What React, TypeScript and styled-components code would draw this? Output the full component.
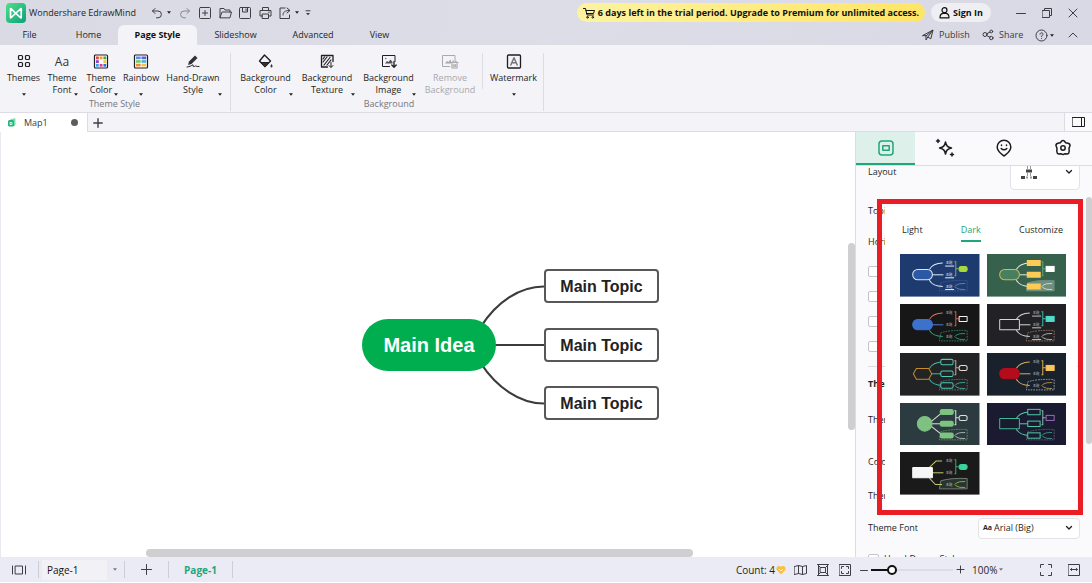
import React from 'react';
import styled, { createGlobalStyle, css } from 'styled-components';

const GREEN = '#1fa67a';
const UI = '"Open Sans", "Noto Sans", "Noto Sans CJK SC", sans-serif';

const GlobalStyle = createGlobalStyle`
  * { box-sizing: border-box; }
  body { margin: 0; background: #fff; overflow: hidden; }
  button, select, input { font: inherit; color: inherit; margin: 0; }
  button { border: 0; background: none; padding: 0; }
  svg { display: block; flex: none; }
`;

const Shell = styled.div`
  display: flex;
  flex-direction: column;
  height: 100vh;
  padding-bottom: 1px;
  font: 9px/12px ${UI};
  color: #1f1f23;
  white-space: nowrap;
`;

const Header = styled.header`
  background: linear-gradient(100deg, #d9dae3, #dcdde7 50%, #d8d9e4);
`;

const TitleBar = styled.div`
  display: flex;
  align-items: center;
  height: 25px;
  padding: 0 6px;
`;

const AppTitle = styled.span`
  width: 118px;
  margin-left: 3px;
`;

const IconButton = styled.button<{ $w: number }>`
  display: flex;
  flex: none;
  align-items: center;
  justify-content: center;
  width: ${(p) => p.$w}px;
  height: 20px;
  color: #3e3e44;
`;

const Spacer = styled.div`
  flex: 1;
`;

const Pill = styled.button<{ $tone: 'yellow' | 'light' }>`
  display: flex;
  align-items: center;
  justify-content: center;
  height: 19px;
  border-radius: 10px;
  font-weight: 700;
  color: #111;
  ${(p) =>
    p.$tone === 'yellow'
      ? css`
          width: 348px;
          gap: 3px;
          background: linear-gradient(90deg, #fdf3a0, #ffe566);
        `
      : css`
          width: 60px;
          gap: 3px;
          margin-left: 6px;
          background: #eeeef3;
        `}
`;

const WindowButtons = styled.div`
  display: flex;
  padding-left: 17px;
`;

const MenuBar = styled.nav`
  display: flex;
  height: 20px;
  padding-right: 2px;
`;

const MenuTab = styled.button<{ $w: number; $active?: boolean }>`
  width: ${(p) => p.$w}px;
  height: 20px;
  ${(p) =>
    p.$active &&
    css`
      font-weight: 700;
      color: #111;
      background: #f3f3f8;
      border-radius: 6px 6px 0 0;
    `}
`;

const MenuAction = styled.button<{ $w: number }>`
  display: flex;
  align-items: center;
  gap: 5px;
  width: ${(p) => p.$w}px;
  color: #3a3a40;
`;

const Ribbon = styled.div`
  display: flex;
  height: 68px;
  background: #f3f3f8;
  border-bottom: 1px solid #dcdce4;
`;

const RibbonGroup = styled.section`
  display: flex;
  flex-direction: column;
  margin: 8px 0 1px;
  padding-left: 4px;
  border-right: 1px solid #dcdce4;
  &:first-child {
    padding-right: 5px;
  }
`;

const RibbonTools = styled.div`
  display: flex;
  flex: 1;
`;

const GroupLabel = styled.div`
  height: 14px;
  line-height: 12px;
  text-align: center;
  color: #77777d;
`;

const Tool = styled.button<{ $w: number; $single?: boolean }>`
  display: grid;
  grid-template-rows: 19px 1fr;
  justify-items: center;
  width: ${(p) => p.$w}px;
  height: 45px;
  &:disabled {
    color: #a9a9ae;
  }
  > :nth-child(1) {
    grid-area: 1 / 1;
    align-self: start;
  }
  > :nth-child(2) {
    grid-area: 2 / 1;
    align-self: start;
  }
  > :nth-child(3) {
    grid-area: 2 / 1;
    align-self: end;
    justify-self: ${(p) => (p.$single ? 'center' : 'end')};
    margin: 0 3px 2px;
  }
`;

const ToolDivider = styled.div`
  width: 1px;
  height: 36px;
  margin: 0 1px;
  background: #dcdce4;
`;

const DocBar = styled.div`
  display: flex;
  height: 19px;
  background: #f3f3f8;
  border-bottom: 1px solid #dcdce4;
`;

const DocTab = styled.button`
  display: flex;
  align-items: center;
  width: 88px;
  height: 19px;
  padding: 0 9px 0 8px;
  gap: 8px;
  background: #fff;
  border-right: 1px solid #dcdce4;
  color: #3a3a40;
`;

const Dot = styled.span`
  width: 7px;
  height: 7px;
  margin-left: auto;
  border-radius: 50%;
  background: #5c5c60;
`;

const PanelToggle = styled.button`
  display: flex;
  align-items: center;
  justify-content: center;
  width: 28px;
  background: #fafafc;
  border-left: 1px solid #dcdce4;
`;

const Workspace = styled.main`
  display: flex;
  flex: 1;
  min-height: 0;
`;

const Canvas = styled.div`
  position: relative;
  flex: 1;
  overflow: hidden;
  background: #fff;
  border-left: 1px solid #e9e9ef;
  svg {
    position: absolute;
    left: 479px;
    top: 148px;
  }
`;

const Node = styled.div<{ $x: number; $y: number; $root?: boolean }>`
  position: absolute;
  left: ${(p) => p.$x}px;
  top: ${(p) => p.$y}px;
  display: flex;
  align-items: center;
  justify-content: center;
  font: bold 16px/20px "Liberation Sans", Arial, sans-serif;
  ${(p) =>
    p.$root
      ? css`
          width: 134px;
          height: 52px;
          border-radius: 26px;
          background: #00ae50;
          color: #fff;
          font-size: 20px;
        `
      : css`
          width: 115px;
          height: 34px;
          padding-top: 2px;
          border: 2px solid #58585a;
          border-radius: 4px;
          background: #fff;
          color: #222;
        `}
`;

const ScrollThumb = styled.div<{ $axis: 'x' | 'y' }>`
  position: absolute;
  border-radius: 4px;
  background: #cfcfd1;
  ${(p) =>
    p.$axis === 'x'
      ? css`
          left: 17%;
          width: 64%;
          bottom: 0;
          height: 8px;
        `
      : css`
          top: 26%;
          height: 44%;
          right: 0;
          width: 7px;
        `}
`;

const Sidebar = styled.aside`
  position: relative;
  display: flex;
  flex-direction: column;
  width: 237px;
  background: #fafafc;
  border-left: 1px solid #dcdce4;
`;

const PanelTabs = styled.div`
  display: grid;
  flex: none;
  grid-template-columns: repeat(4, 1fr);
  height: 34px;
  border-bottom: 1px solid #dcdce4;
`;

const PanelTab = styled.button<{ $active?: boolean }>`
  display: flex;
  align-items: center;
  justify-content: center;
  color: #1c1c1e;
  border-bottom: 2px solid transparent;
  ${(p) =>
    p.$active &&
    css`
      color: ${GREEN};
      background: #def0ea;
      border-bottom-color: ${GREEN};
    `}
`;

const PanelViewport = styled.div`
  position: relative;
  flex: 1;
  min-height: 0;
  overflow: hidden;
`;

const PanelContent = styled.div`
  margin-top: -12px;
  padding: 0 12px 0 12px;
`;

const Row = styled.div<{ $h: number; $bold?: boolean }>`
  display: flex;
  align-items: center;
  justify-content: space-between;
  height: ${(p) => p.$h}px;
  font-weight: ${(p) => (p.$bold ? 700 : 400)};
`;

const Checks = styled.div`
  padding: 7px 0;
`;

const CheckRow = styled.label<{ $h: number }>`
  display: flex;
  align-items: center;
  gap: 5px;
  height: ${(p) => p.$h}px;
  input {
    appearance: none;
    width: 11px;
    height: 11px;
    border: 1px solid #c4c4ca;
    border-radius: 2px;
    background: #fff;
  }
`;

const Rule = styled.hr`
  margin: 0;
  border: 0;
  border-top: 1px solid #dcdce4;
`;

const Picker = styled.div<{ $w: number; $h: number; $inset: number }>`
  display: flex;
  align-items: center;
  gap: 2px;
  width: ${(p) => p.$w}px;
  height: ${(p) => p.$h}px;
  padding: 0 6px 0 ${(p) => p.$inset}px;
  background: #fff;
  border: 1px solid #e2e2e8;
  border-radius: 4px;
  small {
    font-size: 7px;
    font-weight: 700;
  }
  select {
    flex: 1;
    min-width: 0;
    appearance: none;
    border: 0;
    padding: 0;
    background: none;
  }
`;

const SideScroll = styled.div`
  position: absolute;
  top: 8%;
  right: 0;
  width: 6px;
  height: 63%;
  border-radius: 3px;
  background: #cfcfd1;
`;

const Popup = styled.div`
  position: absolute;
  top: 75px;
  right: 15px;
  width: 192px;
  height: 303px;
  padding: 15px 11px 0 15px;
  background: #fff;
`;

const PopupTabs = styled.div`
  display: flex;
  justify-content: space-between;
  padding: 0 3px 0 2px;
`;

const PopupTab = styled.button<{ $active?: boolean }>`
  height: 20px;
  padding-bottom: 3px;
  border-bottom: 2px solid ${(p) => (p.$active ? GREEN : 'transparent')};
  color: ${(p) => (p.$active ? GREEN : 'inherit')};
`;

const ThumbGrid = styled.div`
  display: grid;
  grid-template-columns: 1fr 1fr;
  grid-template-rows: repeat(5, 1fr);
  gap: 7px;
  height: 241px;
  margin-top: 12px;
  button {
    min-height: 0;
  }
  svg {
    width: 100%;
    height: 100%;
  }
`;

const Highlight = styled.div`
  position: absolute;
  top: 67px;
  right: 9px;
  width: 206px;
  height: 316px;
  border: 5px solid #ea1c24;
  pointer-events: none;
`;

const StatusBar = styled.footer`
  display: flex;
  align-items: center;
  height: 25px;
  padding-right: 4px;
  font-size: 10px;
  background: #ebebf5;
`;

const StatusDivider = styled.div`
  width: 1px;
  height: 17px;
  background: #cdcdd6;
`;

const PageSelect = styled.div`
  display: flex;
  align-items: center;
  width: 85px;
  padding: 0 7px 0 3px;
  select {
    flex: 1;
    height: 20px;
    margin-right: 6px;
    padding: 0 5px;
    appearance: none;
    border: 0;
    background: #f1f1f6;
    color: #111;
  }
`;

const PageTab = styled.button`
  width: 63px;
  font-weight: 700;
  color: ${GREEN};
`;

const Count = styled.div`
  display: flex;
  align-items: center;
  gap: 1px;
  margin-right: 3px;
`;

const Zoom = styled.input`
  appearance: none;
  width: 82px;
  height: 12px;
  background: linear-gradient(#111, #111) left center / 20px 2px no-repeat,
    linear-gradient(#dcdce2, #dcdce2) center / 100% 2px no-repeat;
  &::-webkit-slider-thumb {
    appearance: none;
    width: 10px;
    height: 10px;
    border: 2px solid #111;
    border-radius: 50%;
    background: #fff;
  }
`;

const ZoomValue = styled.button`
  display: flex;
  align-items: center;
  gap: 2px;
  width: 65px;
  padding-left: 5px;
`;

type IconProps = { w?: number; h?: number; sw?: number; children: React.ReactNode };

const Icon = ({ w = 16, h = 16, sw = 1, children }: IconProps) => (
  <svg
    width={w}
    height={h}
    viewBox={`0 0 ${w} ${h}`}
    fill="none"
    stroke="currentColor"
    strokeWidth={sw}
    strokeLinecap="round"
    strokeLinejoin="round"
    aria-hidden="true"
  >
    {children}
  </svg>
);

const Caret = ({ color = '#222' }: { color?: string }) => (
  <svg width="4" height="3" viewBox="0 0 4 3" aria-hidden="true">
    <path d="M0 .3h4L2 2.7z" fill={color} />
  </svg>
);

const Chevron = () => (
  <Icon w={8} h={6} sw={1.3}>
    <path d="M1.5 1.5L4 4l2.500-2.500" />
  </Icon>
);

const Logo = () => (
  <svg width="20" height="20" viewBox="0 0 20 20" aria-hidden="true">
    <defs>
      <linearGradient id="logo" x1="0" y1="0" x2="1" y2="1">
        <stop offset="0" stopColor="#4fe08a" />
        <stop offset="1" stopColor="#0e9f7c" />
      </linearGradient>
    </defs>
    <rect width="20" height="20" rx="4" fill="url(#logo)" />
    <path
      d="M4.500 6v8.500q0 .6.500.2L9.500 10.500l5-4.700q.7-.5.700.3v8.400q0 .8-.7.200L10 10.500 5.200 5.800q-.7-.6-.7.200z"
      fill="none"
      stroke="#fff"
      strokeWidth="1.700"
      strokeLinejoin="round"
    />
  </svg>
);

const swatches = ['#e8443a', '#f59a23', '#3fae49', '#8e44c9', '#f7c52d', '#35a7e8', '#d83a8a', '#2f6fe0'];

const toolIcons: Record<string, React.ReactNode> = {
  themes: (
    <Icon sw={1.2}>
      <rect x="2.500" y="2.500" width="4" height="4" rx="1" />
      <rect x="9.500" y="2.500" width="4" height="4" rx="1" />
      <rect x="2.500" y="9.500" width="4" height="4" rx="1" />
      <rect x="9.500" y="9.500" width="4" height="4" rx="1" />
    </Icon>
  ),
  color: (
    <Icon>
      <rect x="1.500" y="2" width="13" height="13" rx="1" strokeWidth="1.200" fill="#fff" />
      {[
        [3, 3.5], [6.700, 3.500], [10.400, 3.500], [3, 7.200], [10.400, 7.200], [3, 10.900], [6.700, 10.900], [10.400, 10.900],
      ].map(([x, y], i) => (
        <rect key={i} x={x} y={y} width="2.800" height="2.800" fill={swatches[i]} stroke="none" />
      ))}
    </Icon>
  ),
  rainbow: (
    <Icon>
      <rect x="1.500" y="2" width="13" height="13" rx="1" strokeWidth="1.200" fill="#fff" />
      {['#5b8def', '#6a5be0', '#7cc96b', '#45b6d9', '#f08a3c', '#f6c244'].map((c, i) => (
        <rect
          key={i}
          x={i % 2 ? 8.5 : 3}
          y={3.500 + Math.floor(i / 2) * 3.600}
          width="4.700"
          height="2.700"
          fill={c}
          stroke="none"
        />
      ))}
    </Icon>
  ),
  pen: (
    <Icon>
      <path d="M3 12l1-3.500 6-6 2.500 2.500-6 6z" fill="#333" stroke="none" />
      <path d="M2 14c3-.3 4-1.200 6-2.200.8.6-.5 1.600.6 1.800s1.400-1 2.400-.6 1 .8 3 .5" />
    </Icon>
  ),
  bucket: (
    <Icon>
      <path d="M6.500 2l6 6-5.500 5.500L1.500 8z" strokeWidth="1.400" />
      <path d="M3 9.500h8L7 13.500z" fill="#333" />
      <path d="M13.500 11c1.500 2 1.200 3.400 0 3.400s-1.500-1.400 0-3.400z" fill="#333" stroke="none" />
    </Icon>
  ),
  texture: (
    <Icon>
      <path d="M8.500 14h-6V2.500h11.500v6" strokeWidth="1.300" />
      <path d="M4 9l4-5M5 12l6-7.500M8 12l4-5M4 6l1.500-2" strokeWidth="1.200" />
      <path d="M12 9.500V14M10 12.500l2 2 2-2" />
    </Icon>
  ),
  image: (
    <Icon>
      <path d="M8.500 13.500H1.500v-11H14v6" />
      <path d="M4 10.500l2-2.500 1.500 1 2-2.500 2 2.500v1.500z" fill="#555" stroke="none" />
      <circle cx="4.800" cy="5.500" r=".7" fill="#555" stroke="none" />
      <path d="M13 8.500V14M10.800 12l2.200 2.200 2.200-2.200" strokeWidth="1.300" />
    </Icon>
  ),
  remove: (
    <Icon w={18}>
      <path d="M8.500 13.500H1.500v-11H14v4" />
      <path d="M4 10.500l2-2.500 1.500 1 2-2.500 .5 1v3z" fill="#aaa" stroke="none" />
      <path d="M10 9.500h7M12 9V8h3v1M11 10.500v4.500h5v-4.500M12.800 11.500v2M14.300 11.500v2" strokeWidth="1.200" />
    </Icon>
  ),
  watermark: (
    <Icon>
      <rect x="1.500" y="2" width="13" height="13" rx="1" strokeWidth="1.300" />
      <path d="M4.800 12L8 4.800 11.200 12M6 9.800h4" strokeWidth="1.500" stroke="#777" />
    </Icon>
  ),
};

const FontGlyph = styled.span`
  font-size: 12px;
  line-height: 18px;
  color: #333;
`;

type ToolDef = { icon: string; label: [string, string?]; w: number; disabled?: boolean };

const themeTools: ToolDef[] = [
  { icon: 'themes', label: ['Themes'], w: 39 },
  { icon: 'font', label: ['Theme', 'Font'], w: 38 },
  { icon: 'color', label: ['Theme', 'Color'], w: 40 },
  { icon: 'rainbow', label: ['Rainbow'], w: 40 },
  { icon: 'pen', label: ['Hand-Drawn', 'Style'], w: 64 },
];

const backgroundTools: ToolDef[] = [
  { icon: 'bucket', label: ['Background', 'Color'], w: 61 },
  { icon: 'texture', label: ['Background', 'Texture'], w: 62 },
  { icon: 'image', label: ['Background', 'Image'], w: 61 },
  { icon: 'remove', label: ['Remove', 'Background'], w: 62, disabled: true },
];

const ToolButton = ({ icon, label, w, disabled }: ToolDef) => (
  <Tool $w={w} $single={!label[1]} disabled={disabled}>
    {icon === 'font' ? <FontGlyph>Aa</FontGlyph> : toolIcons[icon]}
    <span>
      {label[0]}
      {label[1] && <br />}
      {label[1]}
    </span>
    {!disabled && <Caret />}
  </Tool>
);

type ThumbDef = {
  bg: string;
  root: 'pill' | 'rect' | 'hex' | 'circle';
  rootFill: string;
  rootStroke?: string;
  lines: [string, string, string];
  topic: 'text' | 'underline' | 'fill' | 'outline';
  topicColor: string;
  bracket: string;
  subFill: string;
  subStroke?: string;
  subRadius: number;
  region: string;
  regionFill?: string;
  fork: string;
  join?: 'curve' | 'straight' | 'angle';
};

const thumbs: ThumbDef[] = [
  { bg: '#1d3b6f', root: 'pill', rootFill: '#2c59a6', rootStroke: '#dfe8f7', lines: ['#dfe8f7', '#dfe8f7', '#dfe8f7'], topic: 'underline', topicColor: '#e8eef8', bracket: '#7fae4e', subFill: '#a6d93c', subRadius: 6, region: '#3f5f96', fork: '#6c88b8' },
  { bg: '#36614c', root: 'pill', rootFill: '#46805f', rootStroke: '#d8b650', lines: ['#e5ece6', '#e5ece6', '#e5ece6'], topic: 'fill', topicColor: '#fbcb55', bracket: '#5fa878', subFill: '#ffffff', subRadius: 0, region: '#6f8f7e', regionFill: '#6f8f7e', fork: '#d9e2dc' },
  { bg: '#171717', root: 'pill', rootFill: '#3d72cc', lines: ['#d8715c', '#4b7fd0', '#2f9f83'], topic: 'text', topicColor: '#c8c8c8', bracket: '#d8604c', subFill: '#171717', subStroke: '#f2f2f2', subRadius: 1, region: '#2f8f72', fork: '#2f9f83' },
  { bg: '#222226', root: 'rect', rootFill: '#222226', rootStroke: '#d6d6d6', lines: ['#d6d6d6', '#d6d6d6', '#d6d6d6'], topic: 'underline', topicColor: '#c2c2c2', bracket: '#3db8ac', subFill: '#4fdccb', subRadius: 0, region: '#a07c64', fork: '#c0c0c0' },
  { bg: '#222325', root: 'hex', rootFill: '#222325', rootStroke: '#c78d2a', lines: ['#45b5a6', '#45b5a6', '#45b5a6'], topic: 'outline', topicColor: '#4fc9b8', bracket: '#c9a79a', subFill: '#222325', subStroke: '#e8ddd8', subRadius: 6, region: '#77777a', fork: '#45b5a6' },
  { bg: '#19212d', root: 'pill', rootFill: '#b30d1c', lines: ['#d8ae52', '#d8ae52', '#d8ae52'], topic: 'text', topicColor: '#c2c6cc', bracket: '#e0b24c', subFill: '#f8c65c', subRadius: 0, region: '#a8adb5', fork: '#c09a48' },
  { bg: '#2b3b3f', root: 'circle', rootFill: '#7fc183', lines: ['#dbe4e0', '#dbe4e0', '#dbe4e0'], topic: 'fill', topicColor: '#7cc47f', bracket: '#dbe4e0', subFill: '#2b3b3f', subStroke: '#dbe4e0', subRadius: 6, region: '#6b9f5a', fork: '#b8c6c0', join: 'straight' },
  { bg: '#1a1b30', root: 'rect', rootFill: '#1a1b30', rootStroke: '#3fb892', lines: ['#58c9a6', '#58c9a6', '#58c9a6'], topic: 'outline', topicColor: '#4fc9a2', bracket: '#8fb8b8', subFill: '#1a1b30', subStroke: '#9a68b8', subRadius: 0, region: '#66667e', fork: '#3f9f88' },
  { bg: '#191a19', root: 'rect', rootFill: '#f7f7f7', lines: ['#c3c96a', '#c3c96a', '#c3c96a'], topic: 'text', topicColor: '#c8c8c8', bracket: '#2fae80', subFill: '#3bd39c', subRadius: 7, region: '#7f8a84', regionFill: '#28352f', fork: '#a3b552', join: 'angle' },
];

const joinPaths = {
  curve: ['M88 46Q98 28 128 27', 'M88 78Q98 96 128 97'],
  straight: ['M92 56L126 29', 'M92 68L126 95'],
  angle: ['M88 46L108 27H126', 'M88 78L106 97H126'],
};

const ROWS = [27, 62, 97];

const Thumb = (t: ThumbDef) => {
  const [top, bottom] = joinPaths[t.join ?? 'curve'];
  const rootProps = { fill: t.rootFill, stroke: t.rootStroke ?? t.rootFill, strokeWidth: 3 };
  const filledRadius = t.root === 'circle' ? 7 : 1;
  return (
    <svg viewBox="0 0 238 127" preserveAspectRatio="none" aria-hidden="true">
      <rect width="238" height="127" fill={t.bg} />
      <path
        d="M122 86Q150 77 201 79V110H118Z"
        fill={t.regionFill ?? 'none'}
        stroke={t.region}
        strokeWidth="2.500"
        strokeDasharray={t.regionFill ? undefined : '5 3'}
      />
      <g fill="none" strokeWidth="3">
        <path d={top} stroke={t.lines[0]} />
        <path d="M90 62H130" stroke={t.lines[1]} />
        <path d={bottom} stroke={t.lines[2]} />
        <path d="M195 88Q176 87 168 93Q160 97 168 101Q176 107 195 106" stroke={t.fork} strokeWidth="2.500" />
        <path d="M163 23H167V65H163M167 44H176" stroke={t.bracket} />
      </g>
      {t.root === 'pill' && <rect x="38" y="46" width="59" height="31" rx="15" {...rootProps} />}
      {t.root === 'rect' && <rect x="38" y="46" width="59" height="31" rx="2" {...rootProps} />}
      {t.root === 'hex' && <path d="M40 62L49 46H86L95 62L86 78H49Z" {...rootProps} />}
      {t.root === 'circle' && <circle cx="74" cy="62" r="22" {...rootProps} />}
      {ROWS.map((y) => (
        <g key={y}>
          {(t.topic === 'text' || t.topic === 'underline') && (
            <text
              x="147"
              y={y + 4}
              fontSize="10"
              textAnchor="middle"
              fontFamily='"Noto Sans CJK SC", sans-serif'
              fill={t.topicColor}
            >
              主题
            </text>
          )}
          {t.topic === 'underline' && <path d={`M135 ${y + 9}H162`} stroke={t.topicColor} strokeWidth="3" />}
          {t.topic === 'fill' && (
            <rect x="119" y={y - 9} width="42" height="18" rx={filledRadius} fill={t.topicColor} />
          )}
          {t.topic === 'outline' && (
            <rect
              x="122"
              y={y - 8}
              width="37"
              height="16"
              rx={t.root === 'hex' ? 5 : 0}
              fill={t.bg}
              stroke={t.topicColor}
              strokeWidth="3"
            />
          )}
        </g>
      ))}
      <rect
        x="177"
        y="37"
        width="24"
        height="15"
        rx={t.subRadius}
        fill={t.subFill}
        stroke={t.subStroke ?? t.subFill}
        strokeWidth="3"
      />
    </svg>
  );
};

const TitleSection = () => (
  <TitleBar>
    <Logo />
    <AppTitle>Wondershare EdrawMind</AppTitle>
    <IconButton $w={20} aria-label="Undo">
      <Icon w={12} h={12}><path d="M4 1.500L1.500 4 4 6.500M1.500 4H7a3.300 3.300 0 0 1 0 6.800H5.500" /></Icon>
    </IconButton>
    <IconButton $w={4} aria-label="Undo history"><Caret /></IconButton>
    <IconButton $w={28} aria-label="Redo">
      <Icon w={12} h={12}><path stroke="#88888e" d="M8 1.500L10.500 4 8 6.500M10.500 4H5a3.300 3.300 0 0 0 0 6.800h1.500" /></Icon>
    </IconButton>
    <IconButton $w={12} aria-label="New">
      <Icon w={12} h={12}><rect x=".5" y=".5" width="11" height="11" rx="1" /><path d="M6 3.500v5M3.500 6h5" /></Icon>
    </IconButton>
    <IconButton $w={28} aria-label="Open">
      <Icon w={13} h={12}><path d="M1 10.500V1.500h4l1 1.500h5v2M1 10.500L3 5h9.500l-1.500 5.500z" /></Icon>
    </IconButton>
    <IconButton $w={12} aria-label="Save">
      <Icon w={12} h={12}><rect x=".5" y=".5" width="11" height="11" rx="1" /><path d="M3.500 .5v4.500h5V.5M7 2v1.500" /></Icon>
    </IconButton>
    <IconButton $w={28} aria-label="Print">
      <Icon w={13} h={12}><path d="M3.500 3.500v-3h6v3M3.500 9H1V3.500h11V9H9.500M3.500 7h6v4.500h-6zM9.500 5.200h.8" /></Icon>
    </IconButton>
    <IconButton $w={12} aria-label="Export">
      <Icon w={12} h={12}><path d="M6 1H1v10.500h9.500V8M4 8c0-3 2-4.500 6-4.500M8 1l3 2.500L8 6" /></Icon>
    </IconButton>
    <IconButton $w={12} aria-label="Export options"><Caret /></IconButton>
    <IconButton $w={10} aria-label="Customize toolbar">
      <Icon w={6} h={6}><path d="M1 .8h4" /><path d="M1 3h4L3 5.200z" fill="currentColor" stroke="none" /></Icon>
    </IconButton>
    <Spacer />
    <Pill $tone="yellow">
      <Icon w={12} h={12}><path d="M.5 1.500H2.500l1.500 6.500h6.500M3 3.500h8.500L10.500 6.500H3.500" /><circle cx="4.500" cy="10.300" r=".8" /><circle cx="9.800" cy="10.300" r=".8" /></Icon>
      6 days left in the trial period. Upgrade to Premium for unlimited access.
    </Pill>
    <Pill $tone="light">
      <Icon w={11} h={12} sw={1.2}><circle cx="5.500" cy="3.200" r="2.500" /><path d="M1 10.800c0-3 1.500-4.300 2.800-4.500h3.400c1.300.2 2.800 1.500 2.800 4.500z" /></Icon>
      Sign In
    </Pill>
    <WindowButtons>
      <IconButton $w={26} aria-label="Minimize"><Icon w={10} h={10}><path d="M.5 5.500h9" /></Icon></IconButton>
      <IconButton $w={26} aria-label="Restore"><Icon w={10} h={10}><path d="M.5 2.500h7v7h-7zM2.500 2.500v-2h7v7h-2" /></Icon></IconButton>
      <IconButton $w={26} aria-label="Close"><Icon w={10} h={10}><path d="M1 1l8 8M9 1L1 9" /></Icon></IconButton>
    </WindowButtons>
  </TitleBar>
);

const MenuSection = () => (
  <MenuBar>
    <MenuTab $w={59}>File</MenuTab>
    <MenuTab $w={59}>Home</MenuTab>
    <MenuTab $w={79} $active>Page Style</MenuTab>
    <MenuTab $w={77}>Slideshow</MenuTab>
    <MenuTab $w={78}>Advanced</MenuTab>
    <MenuTab $w={55}>View</MenuTab>
    <Spacer />
    <MenuAction $w={60}>
      <Icon w={12} h={12}><path d="M.8 6.500L11 1 8.800 9.800 5.800 8 4 11V7zM4 7l7-6L5.800 8" /></Icon>
      Publish
    </MenuAction>
    <MenuAction $w={52}>
      <Icon w={12} h={12}><circle cx="3" cy="5.500" r="2" /><circle cx="9.300" cy="2.500" r="1.400" /><circle cx="9.300" cy="9" r="1.700" /><path d="M5 4.600l3-1.500M4.800 6.600l3 1.600" /></Icon>
      Share
    </MenuAction>
    <IconButton $w={14} aria-label="Help">
      <Icon w={13} h={13}><circle cx="6.500" cy="6.500" r="5.500" /><path d="M5 5.200c0-2 3-2 3 0 0 1-1.500 1.200-1.500 2.300M6.500 9.300v.1" /></Icon>
    </IconButton>
    <IconButton $w={8} aria-label="Help menu"><Caret /></IconButton>
    <IconButton $w={34} aria-label="Collapse ribbon">
      <Icon w={10} h={6}><path d="M1 5l4-4 4 4" /></Icon>
    </IconButton>
  </MenuBar>
);

const LayoutGlyph = () => (
  <svg width="18" height="20" viewBox="0 0 18 20" fill="#444" aria-hidden="true">
    <path d="M1 2h4v2H1zM13 2h4v2h-4zM6 7.500h6v3H6zM1 14h4v3H1zM13 14h4v3h-4z" />
    <path d="M6.500 3h5v1h-5zM7 4h1v3H7zM10 4h1v3h-1zM7 11h1v3H7zM10 11h1v3h-1zM6 14.500h2v2H6zM10 14.500h2v2h-2z" fill="#999" />
  </svg>
);

const SidePanel = () => (
  <Sidebar>
    <PanelTabs>
      <PanelTab $active aria-label="Style">
        <Icon sw={1.5}><rect x="1" y="1" width="14" height="14" rx="3" /><rect x="4.800" y="5.800" width="6.400" height="4.400" /></Icon>
      </PanelTab>
      <PanelTab aria-label="AI">
        <Icon w={20} h={20} sw={1.5}>
          <path d="M10.500 4c.8 4 2 5 6 6-4 1-5.200 2-6 6-.8-4-2-5-6-6 4-1 5.200-2 6-6z" />
          <path d="M3 1.500v3M1.500 3h3M17 15v3M15.500 16.500h3" />
        </Icon>
      </PanelTab>
      <PanelTab aria-label="Sticker">
        <Icon w={18} h={18} sw={1.5}>
          <path d="M9 17c-1.500-1.500-6.800-4-6.800-9a6.800 6.800 0 0 1 13.600 0c0 5-5.300 7.500-6.800 9z" />
          <path d="M6.500 6v.6M11.500 6v.6M6.200 9.500c1.600 1.800 4 1.800 5.600 0" />
        </Icon>
      </PanelTab>
      <PanelTab aria-label="Settings">
        <Icon w={18} h={18} sw={1.5}>
          <path d="M7.500 2.200q1.500-1.200 3 0l1.200 1.600 2.400.5q2.200.6 1.900 2.500l-1 2.400.2 3q0 2.300-2 2.800l-2.200-.3-2 .9-2-.9-2.200.3q-2-.5-2-2.800l.2-3-1-2.400q-.3-1.900 1.900-2.500l2.400-.5z" />
          <circle cx="9" cy="9" r="2.200" />
        </Icon>
      </PanelTab>
    </PanelTabs>
    <PanelViewport>
      <PanelContent>
        <Row $h={36}>
          <label htmlFor="layout">Layout</label>
          <Picker $w={70} $h={36} $inset={9}>
            <LayoutGlyph />
            <select id="layout" />
            <Chevron />
          </Picker>
        </Row>
        <Row $h={42}>Topic</Row>
        <Row $h={20}>Horizontal</Row>
        <Checks>
          {['a', 'b', 'c', 'd'].map((k) => (
            <CheckRow key={k} $h={25}>
              <input type="checkbox" aria-label="Layout option" />
            </CheckRow>
          ))}
        </Checks>
        <Rule />
        <Row $h={34} $bold>Theme</Row>
        <Row $h={38}>Theme</Row>
        <Row $h={46}>Color</Row>
        <Row $h={22}>Theme</Row>
        <Row $h={42}>
          <label htmlFor="font">Theme Font</label>
          <Picker $w={102} $h={21} $inset={4}>
            <small>Aa</small>
            <select id="font" defaultValue="Arial (Big)">
              <option>Arial (Big)</option>
            </select>
            <Chevron />
          </Picker>
        </Row>
        <CheckRow $h={20}>
          <input type="checkbox" />
          Hand-Drawn Style
        </CheckRow>
      </PanelContent>
      <SideScroll />
    </PanelViewport>
    <Popup>
      <PopupTabs>
        <PopupTab>Light</PopupTab>
        <PopupTab $active>Dark</PopupTab>
        <PopupTab>Customize</PopupTab>
      </PopupTabs>
      <ThumbGrid>
        {thumbs.map((t, i) => (
          <button key={i} aria-label={`Dark theme ${i + 1}`}>
            <Thumb {...t} />
          </button>
        ))}
      </ThumbGrid>
    </Popup>
    <Highlight />
  </Sidebar>
);

const StatusSection = () => (
  <StatusBar>
    <IconButton $w={38} aria-label="Page view">
      <Icon w={14} h={10}><path d="M.5 1v8M13.500 1v8M3.500 1h7v8h-7z" /></Icon>
    </IconButton>
    <StatusDivider />
    <PageSelect>
      <select aria-label="Page" defaultValue="Page-1">
        <option>Page-1</option>
      </select>
      <Caret color="#77777d" />
    </PageSelect>
    <StatusDivider />
    <IconButton $w={43} aria-label="Add page">
      <Icon w={11} h={11}><path d="M5.500 .5v10M.5 5.500h10" /></Icon>
    </IconButton>
    <StatusDivider />
    <PageTab>Page-1</PageTab>
    <StatusDivider />
    <Spacer />
    <Count>
      Count: 4
      <svg width="10" height="10" viewBox="0 0 10 10" aria-hidden="true">
        <path d="M5 9.500L.8 5C-.6 2.500 2.500-.5 5 1.800 7.500-.5 10.600 2.500 9.200 5z" fill="#fbbf3a" />
        <path d="M3 4l2 2 2-2" fill="none" stroke="#fff3c4" />
      </svg>
    </Count>
    <IconButton $w={22} aria-label="Map view">
      <Icon w={13} h={10}><path d="M.5 1.500L4.500 .5l4 1 4-1v8l-4 1-4-1-4 1zM4.500 .5v8M8.500 1.500v8" /></Icon>
    </IconButton>
    <IconButton $w={23} aria-label="Fit width">
      <Icon w={12} h={12}><path d="M.5 .5h11M.5 11.500h11M1.500 .5v11M10.500 .5v11M3.500 3.500h5v5h-5zM1.500 1.500l2 2M10.500 1.500l-2 2M1.500 10.500l2-2M10.500 10.500l-2-2" /></Icon>
    </IconButton>
    <IconButton $w={22} aria-label="Fit page">
      <Icon w={12} h={12}><rect x=".5" y=".5" width="11" height="11" /><path d="M2.500 4.500v-2h2M7.500 2.500h2v2M9.500 7.500v2h-2M4.500 9.500h-2v-2" /></Icon>
    </IconButton>
    <IconButton $w={15} aria-label="Zoom out"><Icon w={8} h={8}><path d="M.5 4.500h7" /></Icon></IconButton>
    <Zoom type="range" min={0} max={100} defaultValue={22} aria-label="Zoom" />
    <IconButton $w={14} aria-label="Zoom in"><Icon w={9} h={9}><path d="M1 4.500h7M4.500 1v7" /></Icon></IconButton>
    <ZoomValue>
      100% <Caret color="#77777d" />
    </ZoomValue>
    <IconButton $w={28} aria-label="Full screen">
      <Icon w={12} h={12}><path d="M.5 3.500v-3h3M8.500 .5h3v3M11.500 8.500v3h-3M3.500 11.500h-3v-3" /></Icon>
    </IconButton>
    <IconButton $w={28} aria-label="Collapse">
      <Icon w={12} h={12}><rect x=".5" y=".5" width="11" height="11" /><path d="M2.500 5.500h7M3.500 4.500v2M8.500 4.500v2" /></Icon>
    </IconButton>
  </StatusBar>
);

export default function App() {
  return (
    <Shell>
      <GlobalStyle />
      <Header>
        <TitleSection />
        <MenuSection />
      </Header>
      <Ribbon>
        <RibbonGroup>
          <RibbonTools>
            {themeTools.map((t) => (
              <ToolButton key={t.icon} {...t} />
            ))}
          </RibbonTools>
          <GroupLabel>Theme Style</GroupLabel>
        </RibbonGroup>
        <RibbonGroup>
          <RibbonTools>
            {backgroundTools.map((t) => (
              <ToolButton key={t.icon} {...t} />
            ))}
            <ToolDivider />
            <ToolButton icon="watermark" label={['Watermark']} w={59} />
          </RibbonTools>
          <GroupLabel>Background</GroupLabel>
        </RibbonGroup>
      </Ribbon>
      <DocBar>
        <DocTab>
          <svg width="8" height="9" viewBox="0 0 8 9" aria-hidden="true">
            <path d="M2 1.500L6 .3c1 0 1.500.5 1.500 1.200V7L6 8.500z" fill="#7fe0b0" />
            <rect y="2" width="6" height="6.500" rx="1.500" fill="#1fb57c" />
            <path d="M2 6.500V4.500h2v2z" fill="none" stroke="#fff" strokeWidth=".8" />
          </svg>
          Map1
          <Dot />
        </DocTab>
        <IconButton $w={20} aria-label="New tab">
          <Icon w={10} h={10} sw={1.4}><path d="M5 .8v8.400M.8 5h8.400" /></Icon>
        </IconButton>
        <Spacer />
        <PanelToggle aria-label="Toggle panel">
          <Icon w={13} h={10}><path d="M.5 .5h12v9H.5zM9.500 .5v9" /></Icon>
        </PanelToggle>
      </DocBar>
      <Workspace>
        <Canvas>
          <svg width="70" height="130" viewBox="0 0 70 130" fill="none" stroke="#3c3c3e" strokeWidth="2.200" aria-hidden="true">
            <path d="M0 48C16 22 40 6 65 6.500M14 65H65M0 82C16 107 40 124 65 123.500" />
          </svg>
          <Node $x={361} $y={187} $root>Main Idea</Node>
          <Node $x={543} $y={137}>Main Topic</Node>
          <Node $x={543} $y={196}>Main Topic</Node>
          <Node $x={543} $y={254}>Main Topic</Node>
          <ScrollThumb $axis="y" />
          <ScrollThumb $axis="x" />
        </Canvas>
        <SidePanel />
      </Workspace>
      <StatusSection />
    </Shell>
  );
}
